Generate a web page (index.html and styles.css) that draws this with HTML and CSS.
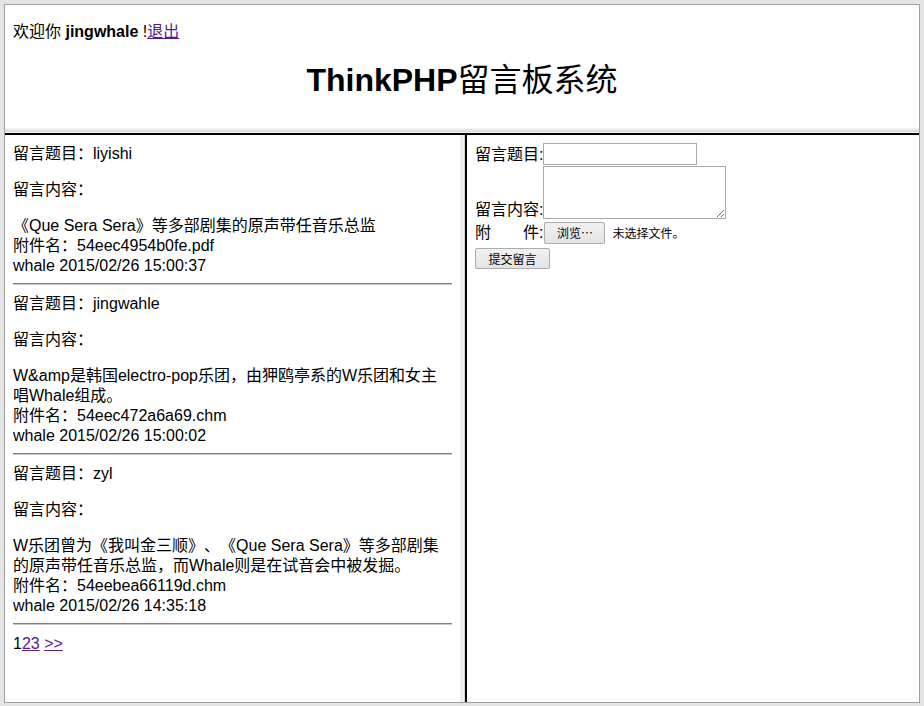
FILE: index.html
```html
<!DOCTYPE html>
<html lang="zh-CN">
<head>
<meta charset="utf-8">
<title>ThinkPHP留言板系统</title>
<link rel="stylesheet" href="styles.css">
</head>
<body>
<div class="window">
  <header class="top-frame">
    <p class="welcome">欢迎你 <b>jingwhale</b> !<a class="link" href="#">退出</a></p>
    <h1 class="site-title">ThinkPHP<span class="title-cjk">留言板系统</span></h1>
  </header>
  <div class="hsplit"></div>
  <div class="bottom">
    <main class="left-frame">
      <article class="post">
        <div class="post-title">留言题目：liyishi</div>
        <div class="post-label">留言内容：</div>
        <div class="post-body">《Que Sera Sera》等多部剧集的原声带任音乐总监<br>附件名：54eec4954b0fe.pdf<br>whale 2015/02/26 15:00:37</div>
      </article>
      <hr class="sep">
      <article class="post">
        <div class="post-title">留言题目：jingwahle</div>
        <div class="post-label">留言内容：</div>
        <div class="post-body">W&amp;amp是韩国electro-pop乐团，由狎鸥亭系的W乐团和女主<br>唱Whale组成。<br>附件名：54eec472a6a69.chm<br>whale 2015/02/26 15:00:02</div>
      </article>
      <hr class="sep">
      <article class="post">
        <div class="post-title">留言题目：zyl</div>
        <div class="post-label">留言内容：</div>
        <div class="post-body">W乐团曾为《我叫金三顺》、《Que Sera Sera》等多部剧集<br>的原声带任音乐总监，而Whale则是在试音会中被发掘。<br>附件名：54eebea66119d.chm<br>whale 2015/02/26 14:35:18</div>
      </article>
      <hr class="sep">
      <div class="pager">1<a class="link" href="#">2</a><a class="link" href="#">3</a> <a class="link" href="#">&gt;&gt;</a></div>
    </main>
    <div class="vsplit"></div>
    <aside class="right-frame">
      <form class="msg-form">
        <div class="form-row">
          <span class="form-label">留言题目:</span><input class="text-input" type="text">
        </div>
        <div class="form-row row-content">
          <span class="form-label">留言内容:</span><textarea class="text-area"></textarea>
        </div>
        <div class="form-row row-file">
          <span class="form-label">附&emsp;&emsp;件:</span><button class="btn btn-browse" type="button">浏览…</button><span class="file-status">未选择文件。</span>
        </div>
        <div class="form-row row-submit">
          <button class="btn btn-submit" type="button">提交留言</button>
        </div>
      </form>
    </aside>
  </div>
</div>
</body>
</html>
```

FILE: styles.css
```css
html, body {
  margin: 0;
  padding: 0;
}

body {
  background: #e4e4e4;
  font-family: "Liberation Sans", "Noto Sans CJK SC", sans-serif;
  font-size: 16px;
  line-height: 20px;
  color: #000;
  text-spacing-trim: space-all;
}

.window {
  margin: 4px 4px 3px 4px;
  height: 699px;
  box-sizing: border-box;
  border: 1px solid #a0a0a0;
  background: #fff;
  display: flex;
  flex-direction: column;
  overflow: hidden;
}

.link {
  color: #551a8b;
  text-decoration: underline;
}

/* top frame */
.top-frame {
  height: 123px;
  flex: none;
  padding: 1px 8px 0;
  box-sizing: border-box;
  overflow: hidden;
}

.welcome {
  margin: 16px 0 0;
}

.site-title {
  margin: 20px 0 0;
  font-size: 32px;
  line-height: 37px;
  font-weight: bold;
  text-align: center;
}

.title-cjk {
  font-weight: normal;
}

.hsplit {
  height: 7px;
  flex: none;
  background: linear-gradient(to bottom, #f4f4f4 0 1px, #e6e6e6 1px 3px, #d9d9d9 3px 4px, #f6f6f6 4px 5px, #000 5px 7px);
}

.bottom {
  flex: 1;
  display: flex;
  min-height: 0;
}

/* left frame */
.left-frame {
  width: 455px;
  flex: none;
  padding: 8px;
  box-sizing: border-box;
  overflow: hidden;
}

.post-title,
.post-label,
.post-body,
.pager {
  padding-top: 1px;
}

.post-title,
.post-label {
  margin-bottom: 15px;
}

.sep {
  margin: 7px 0 8px;
  height: 0;
  border: none;
  border-top: 1px solid #808080;
  border-bottom: 1px solid #c8c8c8;
}

.vsplit {
  width: 7px;
  flex: none;
  background: linear-gradient(to right, #f0f0f0 0 2px, #e4e4e4 2px 3px, #fafafa 3px 4px, #d4d4d4 4px 5px, #000 5px 7px);
}

/* right frame */
.right-frame {
  flex: 1;
  padding: 8px;
  box-sizing: border-box;
}

.msg-form {
  margin: 0;
}

.form-row {
  display: flex;
  align-items: flex-end;
}

.form-label {
  white-space: pre;
}

.text-input {
  width: 154px;
  height: 22px;
  box-sizing: border-box;
  margin: 0;
  border: 1px solid #a9a9a9;
  padding: 1px 2px;
  font: 13px "Liberation Sans", sans-serif;
}

.row-content {
  margin-top: 1px;
}

.text-area {
  width: 183px;
  height: 53px;
  box-sizing: border-box;
  margin: 0 0 1px;
  border: 1px solid #a9a9a9;
  padding: 2px;
  font: 13px "Liberation Mono", monospace;
}

.row-file {
  margin-top: 2px;
  align-items: center;
}

.btn {
  margin: 0;
  padding: 0;
  border: 1px solid #acacac;
  border-radius: 2px;
  background: linear-gradient(to bottom, #f2f2f2, #e3e3e3);
  font-family: "Noto Sans CJK SC", sans-serif;
  font-size: 12px;
  line-height: 14px;
  color: #000;
}

.btn-browse {
  width: 61px;
  height: 22px;
  margin-left: 1px;
}

.file-status {
  margin-left: 7px;
  font-family: "Noto Sans CJK SC", sans-serif;
  font-size: 12px;
}

.row-submit {
  margin-top: 4px;
}

.btn-submit {
  width: 75px;
  height: 21px;
}
```
